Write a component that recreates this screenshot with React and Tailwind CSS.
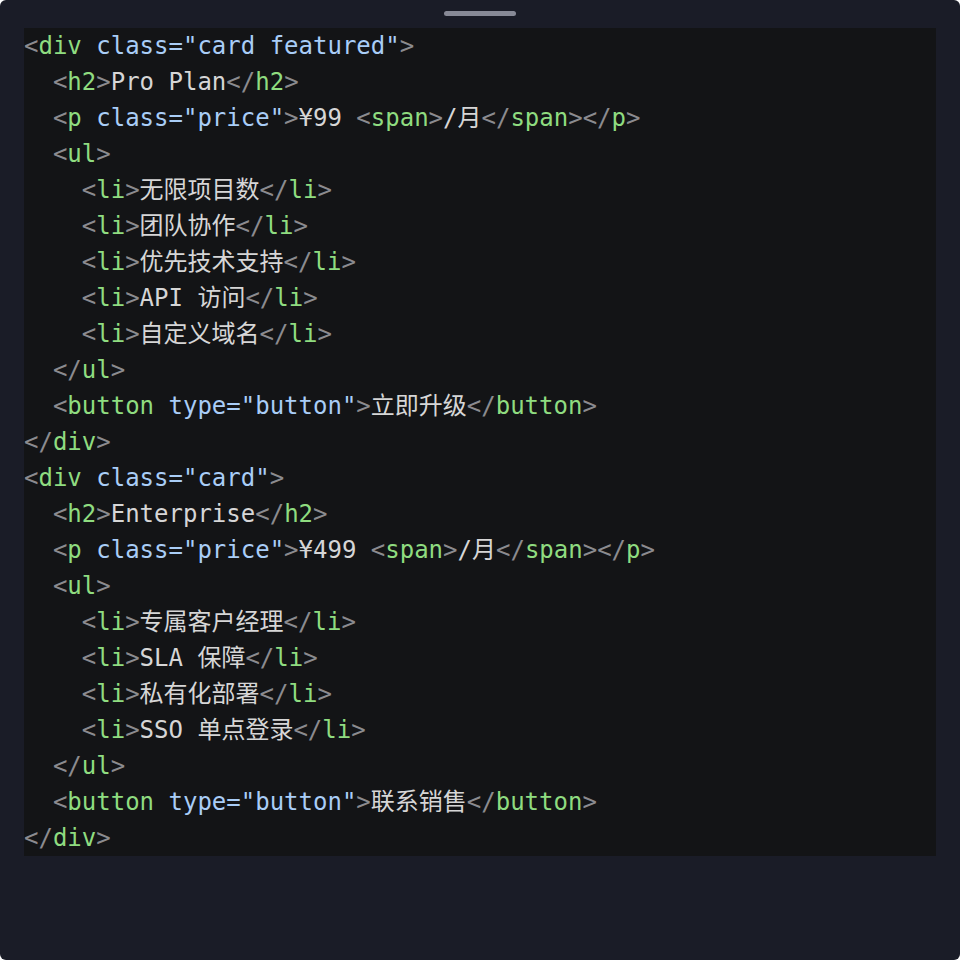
const lines = [
  [0, "div", 'class="card featured"', null, "open"],
  [1, "h2", null, "Pro Plan", "full"],
  [1, "p", 'class="price"', "¥99 ", "price"],
  [1, "ul", null, null, "open"],
  [2, "li", null, "无限项目数", "full"],
  [2, "li", null, "团队协作", "full"],
  [2, "li", null, "优先技术支持", "full"],
  [2, "li", null, "API 访问", "full"],
  [2, "li", null, "自定义域名", "full"],
  [1, "ul", null, null, "close"],
  [1, "button", 'type="button"', "立即升级", "full"],
  [0, "div", null, null, "close"],
  [0, "div", 'class="card"', null, "open"],
  [1, "h2", null, "Enterprise", "full"],
  [1, "p", 'class="price"', "¥499 ", "price"],
  [1, "ul", null, null, "open"],
  [2, "li", null, "专属客户经理", "full"],
  [2, "li", null, "SLA 保障", "full"],
  [2, "li", null, "私有化部署", "full"],
  [2, "li", null, "SSO 单点登录", "full"],
  [1, "ul", null, null, "close"],
  [1, "button", 'type="button"', "联系销售", "full"],
  [0, "div", null, null, "close"],
];

function P({ children }) {
  return <span className="text-[#8b8b8f]">{children}</span>;
}
function Tag({ children }) {
  return <span className="text-[#8fdc80]">{children}</span>;
}
function Attr({ children }) {
  return <span className="text-[#a9cdf7]">{children}</span>;
}
function Txt({ children }) {
  return <span className="text-[#d6d6d6]">{children}</span>;
}

function Open({ name, attr }) {
  return (
    <>
      <P>&lt;</P>
      <Tag>{name}</Tag>
      {attr && <Attr>{" " + attr}</Attr>}
      <P>&gt;</P>
    </>
  );
}

function Close({ name }) {
  return (
    <>
      <P>&lt;/</P>
      <Tag>{name}</Tag>
      <P>&gt;</P>
    </>
  );
}

function Line({ indent, tag, attr, text, kind }) {
  return (
    <div className="h-9">
      {"  ".repeat(indent)}
      {kind === "close" ? <Close name={tag} /> : <Open name={tag} attr={attr} />}
      {text && <Txt>{text}</Txt>}
      {kind === "price" && (
        <>
          <Open name="span" />
          <Txt>/月</Txt>
          <Close name="span" />
        </>
      )}
      {(kind === "full" || kind === "price") && <Close name={tag} />}
    </div>
  );
}

export default function App() {
  return (
    <div className="w-[960px] h-[960px] bg-white">
      <div className="w-full h-full bg-[#1a1c27] rounded-[6px] px-6 pt-7 relative">
        <div className="absolute left-[444px] top-[11px] w-[72px] h-[5px] rounded-full bg-[#878996]" />
        <pre
          className="bg-[#131416] whitespace-pre text-[24px] leading-9"
          style={{ fontFamily: '"DejaVu Sans Mono", "Noto Sans CJK SC", monospace' }}
        >
          {lines.map(([indent, tag, attr, text, kind], i) => (
            <Line key={i} indent={indent} tag={tag} attr={attr} text={text} kind={kind} />
          ))}
        </pre>
      </div>
    </div>
  );
}
